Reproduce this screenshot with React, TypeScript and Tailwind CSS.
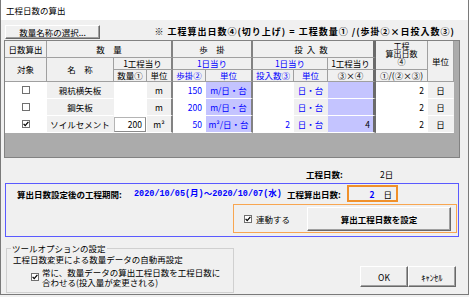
import React from "react";

const HN = "border-r border-r-[#a0a0a0]";
const T1 = "border-r-2 border-r-[#828282]";
const T2 = "border-r-[3px] border-r-[#6b6b6b]";
const HB = "bg-[#f0f0f0] border-b border-b-[#a0a0a0] flex items-center justify-center leading-[11px] whitespace-nowrap";
const DB = "border-b border-b-white flex items-center leading-[11px] whitespace-nowrap";
const DN = "border-r border-r-transparent";
const BTN = "bg-[#f0f0f0] border border-t-white border-l-white border-r-[#696969] border-b-[#696969] shadow-[inset_-1px_-1px_0_#a0a0a0] flex items-center justify-center";

function Check({ checked }: { checked?: boolean }) {
  return (
    <span className="inline-flex items-center justify-center w-[8px] h-[8px] border border-[#707070] bg-white shrink-0">
      {checked && (
        <svg width="6" height="6" viewBox="0 0 6 6">
          <path d="M0.6 2.9 L2.2 4.6 L5.4 0.9" stroke="#000" strokeWidth="1.3" fill="none" />
        </svg>
      )}
    </span>
  );
}

type RowProps = {
  checked?: boolean;
  name: string;
  qty?: string;
  unit: string;
  rate: string;
  rateUnit: string;
  inp?: string;
  prod?: string;
  days: string;
};

function DataRow({ checked, name, qty, unit, rate, rateUnit, inp, prod, days }: RowProps) {
  return (
    <>
      <div className={`${DB} ${DN} bg-white justify-center`}>
        <Check checked={checked} />
      </div>
      <div className={`${DB} ${DN} bg-[#f0f0f0] justify-center`}>{name}</div>
      <div className={`${DB} ${DN} bg-white justify-end`}>
        {qty ? (
          <div className="w-full h-[15px] mt-[1px] bg-white border border-[#b4b4b4] border-r-[#8a8a8a] border-b-[#8a8a8a] flex items-center justify-end pr-[3px]">
            {qty}
          </div>
        ) : null}
      </div>
      <div className={`${DB} ${T1} bg-[#f0f0f0] justify-center`}>{unit}</div>
      <div className={`${DB} ${DN} bg-white justify-end pr-[3px] text-[#0000ff]`}>{rate}</div>
      <div className={`${DB} ${T1} bg-[#c4c4ff] justify-center text-[#0000ff]`}>{rateUnit}</div>
      <div className={`${DB} ${DN} bg-white justify-end pr-[3px] text-[#0000ff]`}>{inp}</div>
      <div className={`${DB} ${DN} bg-[#f0f0f0] justify-center text-[#0000ff]`}>日・台</div>
      <div className={`${DB} ${T2} bg-[#c4c4ff] justify-end pr-[3px]`}>{prod}</div>
      <div className={`${DB} ${DN} bg-white justify-end pr-[3px]`}>{days}</div>
      <div className={`${DB} ${DN} bg-[#f0f0f0] justify-center`}>日</div>
    </>
  );
}

export default function App() {
  return (
    <div className="w-[469px] h-[297px] bg-[#f0f0f0]">
      <div className="w-[469px] h-[295px] bg-[#f0f0f0] border-l border-r border-b border-[#7a7a7a] font-['Noto_Sans_CJK_JP',sans-serif] text-[8.5px] text-black flex flex-col overflow-hidden">
        {/* title */}
        <div className="h-[20px] bg-white flex items-center pl-[5px] leading-[10px] shrink-0">工程日数の算出</div>

        {/* toolbar */}
        <div className="mt-[5px] h-[14px] flex items-center justify-between pl-[4px] pr-[13px] shrink-0">
          <div className={`w-[95px] h-[14px] leading-[10px] ${BTN}`}>数量名称の選択...</div>
          <div className="font-bold text-[9px] leading-[10px] tracking-[1px] whitespace-nowrap">
            ※ 工程算出日数④(切り上げ) = 工程数量① /(歩掛②×日投入数③)
          </div>
        </div>

        {/* grid */}
        <div className="mt-[1px] ml-[3px] w-[456px] h-[118px] border border-[#828282] bg-[#ababab] shrink-0">
          <div className="grid grid-cols-[42px_67px_33px_26px_33px_47px_41px_34px_48px_52px_26px] grid-rows-[17px_12px_12px_17px_17px_17px] w-[449px]">
            <div className={`${HB} ${HN} col-start-1 row-start-1`}>日数算出</div>
            <div className={`${HB} ${T1} col-start-2 col-span-3 row-start-1`}>数　量</div>
            <div className={`${HB} ${T1} col-start-5 col-span-2 row-start-1`}>歩　掛</div>
            <div className={`${HB} ${T2} col-start-7 col-span-3 row-start-1 tracking-[4px]`}>投入数</div>
            <div className={`${HB} ${HN} col-start-10 row-start-1 row-span-2 flex-col !leading-[8px] text-[8px] pb-[2px]`}>
              <span>工程</span>
              <span>算出日数</span>
              <span>④</span>
            </div>
            <div className={`${HB} ${HN} col-start-11 row-start-1 row-span-3`}>単位</div>

            <div className={`${HB} ${HN} col-start-1 row-start-2 row-span-2`}>対象</div>
            <div className={`${HB} ${HN} col-start-2 row-start-2 row-span-2`}>名　称</div>
            <div className={`${HB} ${T1} col-start-3 col-span-2 row-start-2`}>1工程当り</div>
            <div className={`${HB} ${T1} col-start-5 col-span-2 row-start-2 text-[#0000ff]`}>1日当り</div>
            <div className={`${HB} ${HN} col-start-7 col-span-2 row-start-2 text-[#0000ff]`}>1日当り</div>
            <div className={`${HB} ${T2} col-start-9 row-start-2`}>1工程当り</div>

            <div className={`${HB} ${HN} col-start-3 row-start-3`}>数量①</div>
            <div className={`${HB} ${T1} col-start-4 row-start-3`}>単位</div>
            <div className={`${HB} ${HN} col-start-5 row-start-3 text-[#0000ff]`}>歩掛②</div>
            <div className={`${HB} ${T1} col-start-6 row-start-3 text-[#0000ff]`}>単位</div>
            <div className={`${HB} ${HN} col-start-7 row-start-3 text-[#0000ff]`}>投入数③</div>
            <div className={`${HB} ${HN} col-start-8 row-start-3 text-[#0000ff]`}>単位</div>
            <div className={`${HB} ${T2} col-start-9 row-start-3`}>③×④</div>
            <div className={`${HB} ${HN} col-start-10 row-start-3`}>①/(②×③)</div>

            <DataRow name="親杭横矢板" unit="m" rate="150" rateUnit="m/日・台" days="2" />
            <DataRow name="鋼矢板" unit="m" rate="200" rateUnit="m/日・台" days="2" />
            <DataRow checked name="ソイルセメント" qty="200" unit="m²" rate="50" rateUnit="m²/日・台" inp="2" prod="4" days="2" />
          </div>
        </div>

        {/* 工程日数 */}
        <div className="mt-[11px] h-[10px] flex items-center leading-[10px] pl-[305px] shrink-0">
          <span className="w-[74px] font-bold">工程日数:</span>
          <span>2日</span>
        </div>

        {/* blue box */}
        <div className="mt-[4px] ml-[4px] w-[454px] h-[54px] border border-[#5a5aff] flex flex-col shrink-0">
          <div className="mt-[1px] h-[17px] flex items-center leading-[10px]">
            <span className="ml-[11px] w-[117px] font-bold whitespace-nowrap">算出日数設定後の工程期間:</span>
            <span className="w-[153px] font-bold text-[#0000ff] font-['Liberation_Mono','Noto_Sans_CJK_JP',monospace] whitespace-nowrap">
              2020/10/05(月)～2020/10/07(水)
            </span>
            <span className="w-[60px] font-bold whitespace-nowrap">工程算出日数:</span>
            <div className="w-[51px] h-[17px] border-2 border-[#f0902a] flex items-center justify-end pr-[4px]">
              <span className="font-bold text-[#0000ff]">2</span>
              <span className="ml-[9px]">日</span>
            </div>
          </div>
          <div className="mt-[2px] ml-[227px] w-[224px] h-[29px] border border-[#f8a651] flex items-center">
            <div className="w-[73px] flex items-center pl-[10px] leading-[10px]">
              <Check checked />
              <span className="ml-[4px]">連動する</span>
            </div>
            <div className={`w-[144px] h-[24px] font-bold leading-[10px] ${BTN}`}>算出工程日数を設定</div>
          </div>
        </div>

        {/* bottom */}
        <div className="mt-[6px] flex items-end shrink-0">
          <fieldset className="ml-[5px] w-[228px] h-[50px] border border-[#d0d0d0]">
            <legend className="ml-[4px] px-[1px] leading-[10px]">ツールオプションの設定</legend>
            <div className="pl-[6px] mt-[1px] leading-[10px] whitespace-nowrap">工程日数変更による数量データの自動再設定</div>
            <div className="mt-[3px] pl-[24px] flex items-center">
              <Check checked />
              <div className="ml-[3px] leading-[10px] whitespace-nowrap">
                常に、数量データの算出工程日数を工程日数に
                <br />
                合わせる(投入量が変更される)
              </div>
            </div>
          </fieldset>
          <div className="ml-auto mr-[12px] mb-[6px] flex">
            <div className={`w-[48px] h-[21px] leading-[10px] ${BTN}`}>OK</div>
            <div className={`w-[48px] h-[21px] leading-[10px] ${BTN}`}>ｷｬﾝｾﾙ</div>
          </div>
        </div>
      </div>
    </div>
  );
}
